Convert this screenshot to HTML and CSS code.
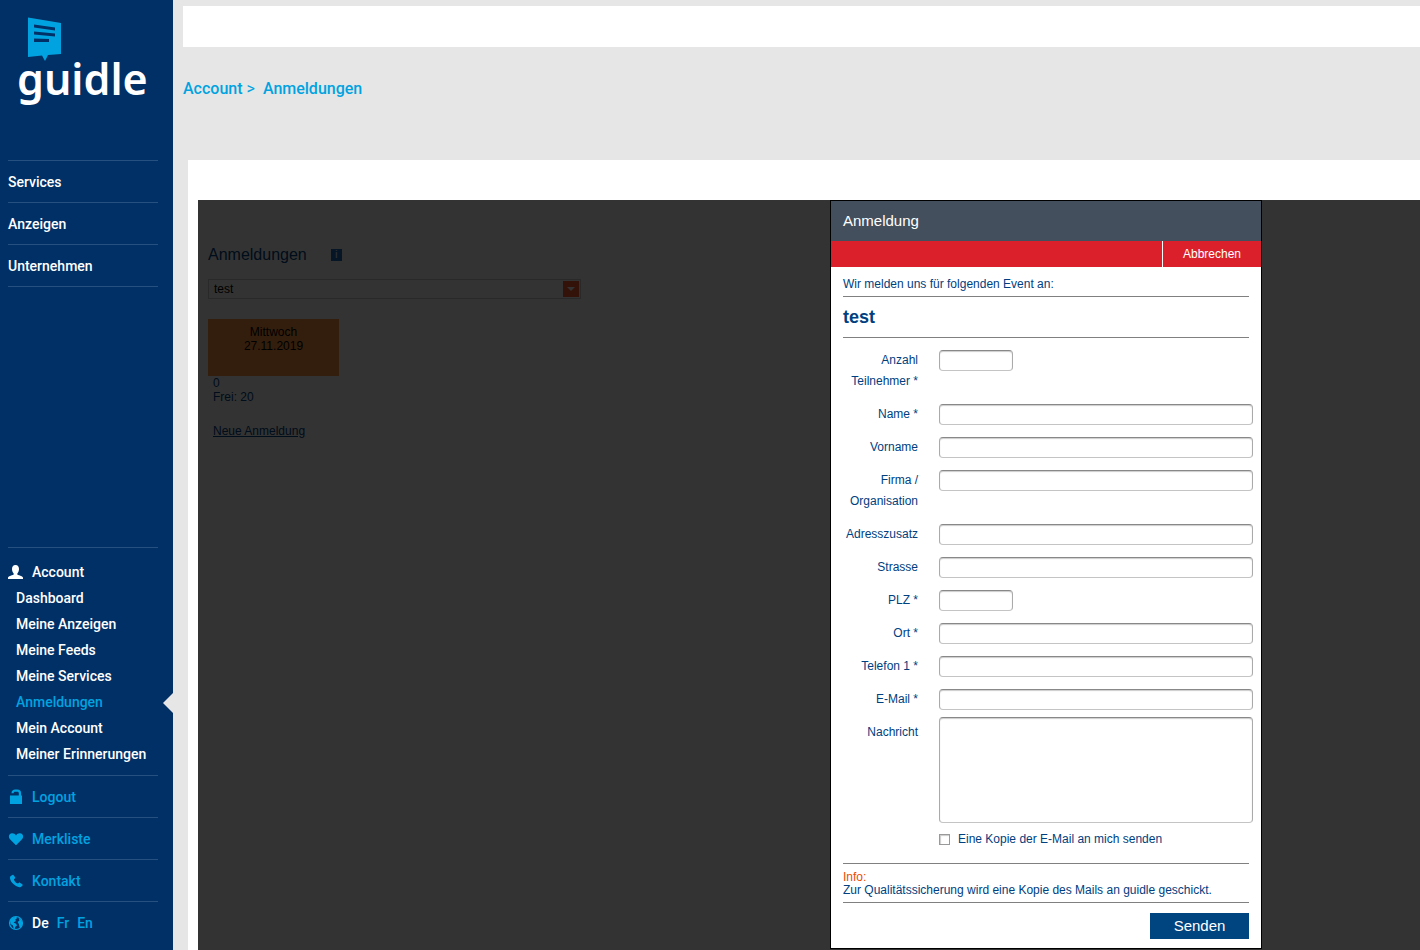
FILE: index.html
```html
<!DOCTYPE html>
<html lang="de">
<head>
<meta charset="utf-8">
<title>guidle – Anmeldungen</title>
<link rel="stylesheet" href="styles.css">
</head>
<body>
<div class="app">
  <aside class="sidebar">
    <a class="logo" href="#">
      <svg class="logo-mark" viewBox="0 0 35 45" aria-hidden="true">
        <path fill="#00a3e0" d="M1 .5 34 6v31l-13 1-3 6-3-5.500L1 40z"/>
        <path fill="#003066" d="M7 7.500 28 10.500v3L7 10.500zM7 14.500 28 16.500v3L7 17.500zM7 21.500l15 .5v3H7z"/>
      </svg>
      <span class="logo-text">guidle</span>
    </a>
    <nav class="rows main-nav">
      <a href="#">Services</a>
      <a href="#">Anzeigen</a>
      <a href="#">Unternehmen</a>
    </nav>
    <nav class="account">
      <a class="account-head" href="#">
        <svg class="icon" viewBox="0 0 16 16" aria-hidden="true"><path fill="currentColor" d="M7.500 1C10 1 11 2.700 11 5c0 2-.7 3.200-1.600 4.300v1.400c1.800.7 5.600 1.300 5.600 3V15H0v-1.300c0-1.700 3.800-2.300 5.600-3V9.300C4.700 8.200 4 7 4 5c0-2.300 1-4 3.500-4z"/></svg>
        Account
      </a>
      <a href="#">Dashboard</a>
      <a href="#">Meine Anzeigen</a>
      <a href="#">Meine Feeds</a>
      <a href="#">Meine Services</a>
      <a class="active" href="#">Anmeldungen</a>
      <a href="#">Mein Account</a>
      <a href="#">Meiner Erinnerungen</a>
    </nav>
    <div class="rows tools">
      <a href="#">
        <svg class="icon" viewBox="0 0 16 16" aria-hidden="true"><path fill="currentColor" d="M2 6.500h8.800V4.300c0-1-.6-1.500-1.600-1.500H7.300c-1 0-1.600.5-1.600 1.400H3.500C3.500 2 5 .6 7.200.6h2.200c2.300 0 3.700 1.400 3.700 3.600v2.300H14V15H2z"/></svg>
        Logout
      </a>
      <a href="#">
        <svg class="icon" viewBox="0 0 16 16" aria-hidden="true"><path fill="currentColor" d="M8 14.200 2 8.300C-.2 5.800 1 2.300 4.200 2.300c1.700 0 3 .8 3.800 2.100.8-1.300 2.100-2.100 3.800-2.100C15 2.300 16.200 5.800 14 8.300z"/></svg>
        Merkliste
      </a>
      <a href="#">
        <svg class="icon" viewBox="0 0 16 16" aria-hidden="true"><path fill="currentColor" d="M4.500 2 2.700 3c-1.400 1.300-.6 4.500 1.900 7.300 2.700 3 6 4.500 8.200 3.600l1.700-1.300c.4-.4.4-.8 0-1.100L12 9.700c-.4-.3-.8-.3-1.100 0l-1 .9c-1.900-.7-3.500-2.500-4-4.400l1-.8c.4-.3.4-.7.200-1.100L5.600 2.200c-.3-.4-.7-.5-1.100-.2z"/></svg>
        Kontakt
      </a>
      <div class="languages">
        <svg class="icon" viewBox="0 0 16 16" aria-hidden="true"><circle cx="8" cy="8" r="6.500" fill="none" stroke="currentColor" stroke-width="1.200"/><path fill="currentColor" d="M2 5.500 4.500 2.500l4-.7.500 1.400-1.700 1.300.6 1.400L5.500 7.500l2.600 1.300.9 1.700L7 12v2.300L5.500 13 5 10.500 2.500 9zM10.500 2.500l3 2.500 1 4-1.500 3-1.500.3-.5-2.800L9.700 7l1.800-1.500z"/></svg>
        <a class="current" href="#">De</a>
        <a href="#">Fr</a>
        <a href="#">En</a>
      </div>
    </div>
  </aside>

  <main class="content">
    <div class="topbar"></div>
    <nav class="breadcrumb" aria-label="Breadcrumb">
      <a href="#">Account</a><span>&gt;</span><a href="#">Anmeldungen</a>
    </nav>
    <div class="panel">
      <div class="stage">
        <section class="events">
          <h1>Anmeldungen <button class="info" type="button">i</button></h1>
          <div class="picker">
            <select aria-label="Event"><option>test</option></select>
            <svg class="picker-arrow" viewBox="0 0 16 16" aria-hidden="true"><path fill="#ff5a30" d="M0 0h16v16H0z"/><path fill="#fff" d="M4 6h8l-4 4z"/></svg>
          </div>
          <div class="date">Mittwoch<br>27.11.2019</div>
          <div class="counts">0<br>Frei: 20</div>
          <a class="new" href="#">Neue Anmeldung</a>
        </section>

        <div class="overlay">
          <form class="dialog">
            <h2>Anmeldung</h2>
            <div class="dialog-bar"><button type="button">Abbrechen</button></div>
            <div class="dialog-body">
              <p class="intro">Wir melden uns für folgenden Event an:</p>
              <h3>test</h3>
              <div class="fields">
                <div class="field"><label for="anzahl">Anzahl Teilnehmer *</label><input class="short" id="anzahl" type="text"></div>
                <div class="field"><label for="name">Name *</label><input id="name" type="text"></div>
                <div class="field"><label for="vorname">Vorname</label><input id="vorname" type="text"></div>
                <div class="field"><label for="firma">Firma / Organisation</label><input id="firma" type="text"></div>
                <div class="field"><label for="zusatz">Adresszusatz</label><input id="zusatz" type="text"></div>
                <div class="field"><label for="strasse">Strasse</label><input id="strasse" type="text"></div>
                <div class="field"><label for="plz">PLZ *</label><input class="short" id="plz" type="text"></div>
                <div class="field"><label for="ort">Ort *</label><input id="ort" type="text"></div>
                <div class="field"><label for="telefon">Telefon 1 *</label><input id="telefon" type="text"></div>
                <div class="field last"><label for="email">E-Mail *</label><input id="email" type="text"></div>
                <div class="field message"><label for="nachricht">Nachricht</label><textarea id="nachricht"></textarea></div>
              </div>
              <div class="copy"><input id="kopie" type="checkbox"><label for="kopie">Eine Kopie der E-Mail an mich senden</label></div>
              <div class="note"><span>Info:</span><br>Zur Qualitätssicherung wird eine Kopie des Mails an guidle geschickt.</div>
              <button class="send" type="submit">Senden</button>
            </div>
          </form>
        </div>
      </div>
    </div>
  </main>
</div>
</body>
</html>
```
FILE: styles.css
```css
* { box-sizing: border-box; }

body {
  margin: 0;
  background: #e6e6e6;
  color: #004080;
  font: 12px/14px "Liberation Sans", Arial, sans-serif;
}

h1, h2, h3, p { margin: 0; font-weight: normal; }
a { color: inherit; text-decoration: none; }
button, input, select, textarea { font: inherit; margin: 0; }

.app { display: flex; min-height: 100vh; }

/* Sidebar */
.sidebar {
  display: flex;
  flex-direction: column;
  flex: 0 0 173px;
  padding: 17px 15px 7px 8px;
  background: #003066;
  color: #fff;
  font: 500 14px/26px Roboto, sans-serif;
}
.logo { display: flex; flex-direction: column; height: 143px; padding-left: 9px; }
.logo-mark { width: 35px; height: 45px; margin-left: 10px; }
.logo-text { margin-top: -8px; font: 600 43px/50px "Noto Sans", sans-serif; }
.icon { flex: none; width: 16px; height: 16px; margin-right: 8px; }

.rows > * {
  display: flex;
  align-items: center;
  height: 42px;
  border-top: 1px solid #26507f;
}
.main-nav { border-bottom: 1px solid #26507f; margin-bottom: auto; }

.account {
  display: flex;
  flex-direction: column;
  padding: 11px 0 8px;
  border-top: 1px solid #26507f;
}
.account a { padding-left: 8px; white-space: nowrap; }
.account .account-head { display: flex; align-items: center; padding-left: 0; }
.account .active { position: relative; color: #00a3e0; }
.active::after {
  content: "";
  position: absolute;
  top: 4px;
  right: -15px;
  border: 10px solid transparent;
  border-left: 0;
  border-right-color: #e6e6e6;
}
.tools { color: #00a3e0; }
.languages a { margin-right: 8px; }
.languages .current { color: #fff; }

/* Content */
.content { display: flex; flex-direction: column; flex: 1; min-width: 0; padding: 6px 0 0 10px; }
.topbar { height: 41px; background: #fff; }
.breadcrumb {
  display: flex;
  height: 113px;
  padding-top: 29px;
  color: #00a3e0;
  font: 500 16px/26px Roboto, sans-serif;
}
.breadcrumb span { margin: 0 8px 0 4px; font-weight: normal; }
.panel {
  display: flex;
  flex: 1;
  margin-left: 5px;
  padding: 40px 0 0 10px;
  background: #fff;
}
.stage { position: relative; flex: 1; min-height: 750px; }

.events { padding: 45px 10px; }
.events h1 { display: flex; align-items: center; gap: 24px; font-size: 16px; line-height: 20px; }
.info {
  width: 11px;
  height: 12px;
  padding: 0;
  border: 0;
  background: #2070c0;
  color: #fff;
  font-size: 10px;
  line-height: 12px;
}
.picker { position: relative; width: 373px; margin: 14px 0 20px; }
.picker select {
  display: block;
  width: 100%;
  height: 20px;
  padding: 0 5px;
  appearance: none;
  border: 1px solid #ccc;
  background: #fff;
  color: #000;
}
.picker-arrow { position: absolute; top: 2px; right: 2px; width: 16px; height: 16px; pointer-events: none; }
.date { width: 131px; height: 57px; padding-top: 6px; background: #ff9640; color: #000; text-align: center; }
.counts { padding: 0 5px; margin-bottom: 20px; }
.new { margin-left: 5px; text-decoration: underline; }

/* Dialog */
.overlay {
  position: absolute;
  inset: 0;
  display: flex;
  align-items: flex-start;
  background: rgba(0, 0, 0, .8);
}
.overlay::before { content: ""; flex: 4; }
.overlay::after { content: ""; flex: 1; }
.dialog { flex: 0 0 432px; border: 1px solid #000; background: #fff; }
.dialog h2 { padding: 0 12px; background: #444f5d; color: #fff; font-size: 15px; line-height: 40px; }
.dialog-bar { display: flex; justify-content: flex-end; background: #db202c; }
.dialog-bar button {
  width: 99px;
  height: 26px;
  padding: 0;
  border: 0;
  border-left: 1px solid #fff;
  background: none;
  color: #fff;
}
.dialog-body { display: flex; flex-direction: column; padding: 10px 12px 9px; }
.intro { padding-bottom: 5px; border-bottom: 1px solid #808080; }
.dialog h3 { border-bottom: 1px solid #808080; font-size: 18px; font-weight: bold; line-height: 40px; }

.fields { display: flex; flex-direction: column; gap: 12px; margin: 12px -4px 0 0; line-height: 21px; }
.field { display: flex; align-items: flex-start; gap: 21px; }
.field label { flex: 0 0 75px; text-align: right; }
.field input, .field textarea {
  flex: 1;
  min-width: 0;
  height: 21px;
  padding: 0 4px;
  border: 1px solid #aaa;
  border-top-color: #888;
  border-bottom-color: #c4c4c4;
  border-radius: 4px;
  background: #fff;
  box-shadow: inset 0 1px 1px #ccc;
}
.field .short { flex: 0 0 74px; }
.field.last { margin-bottom: -5px; }
.message label { padding-top: 5px; }
.field textarea { height: 106px; resize: none; }

.copy { display: flex; align-items: center; gap: 8px; margin: 9px 0 17px 96px; }
.copy input {
  width: 11px;
  height: 11px;
  appearance: none;
  border: 1px solid #999;
  background: #fff;
  box-shadow: inset 1px 1px 1px #ccc;
}
.note { padding: 7px 0 5px; border: solid #808080; border-width: 1px 0; line-height: 13px; }
.note span { color: #f04a00; }
.send {
  align-self: flex-end;
  width: 99px;
  height: 26px;
  margin-top: 10px;
  padding: 0;
  border: 0;
  background: #004480;
  color: #fff;
  font-size: 15px;
}
```
